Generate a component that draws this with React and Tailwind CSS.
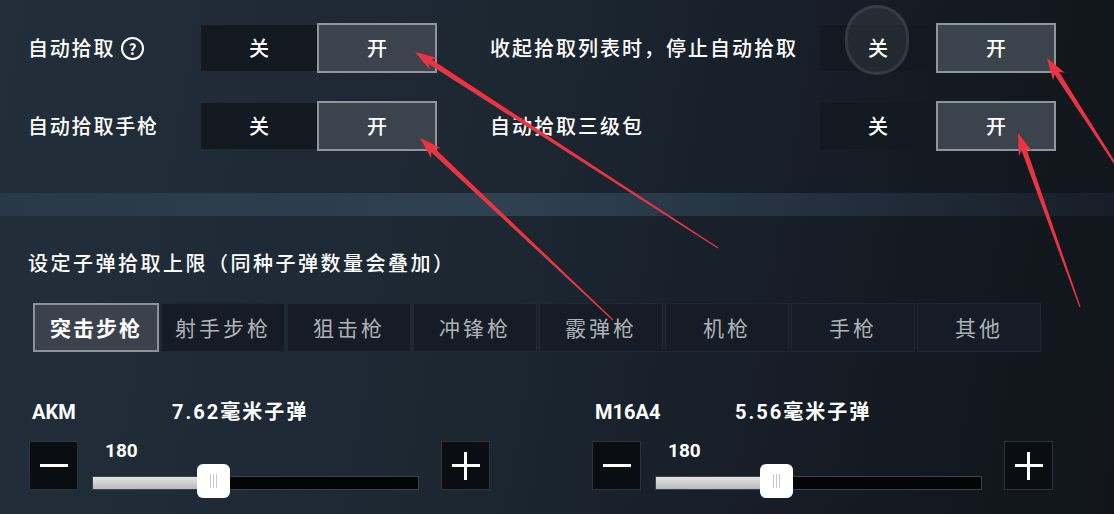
const cjk = { fontFamily: '"Noto Sans CJK SC", "Noto Sans", sans-serif' };
const num = { fontFamily: 'Roboto, "Noto Sans CJK SC", sans-serif' };

const toggleRows = [
  { left: "自动拾取", help: true, right: "收起拾取列表时，停止自动拾取" },
  { left: "自动拾取手枪", help: false, right: "自动拾取三级包" },
];

const tabs = ["突击步枪", "射手步枪", "狙击枪", "冲锋枪", "霰弹枪", "机枪", "手枪", "其他"];

const guns = [
  { name: "AKM", ammo: "7.62毫米子弹", value: 180, pos: 0.32 },
  { name: "M16A4", ammo: "5.56毫米子弹", value: 180, pos: 0.32 },
];

// red annotation arrows: tip -> tail
const arrows = [
  { tip: [415, 52], tail: [718, 248] },
  { tip: [420, 138], tail: [613, 320] },
  { tip: [1047, 58], tail: [1132, 190] },
  { tip: [1018, 133], tail: [1080, 307] },
];

function arrowPoints({ tip, tail }) {
  const dx = tail[0] - tip[0];
  const dy = tail[1] - tip[1];
  const len = Math.hypot(dx, dy);
  const ux = dx / len;
  const uy = dy / len;
  const nx = -uy;
  const ny = ux;
  const p = (d, w) => `${tip[0] + ux * d + nx * w},${tip[1] + uy * d + ny * w}`;
  return [
    p(0, 0),
    p(22, 7),
    p(18, 2.6),
    p(len, 0.6),
    p(len, -0.6),
    p(18, -2.6),
    p(22, -7),
  ].join(" ");
}

function Toggle() {
  return (
    <div className="flex items-center">
      <div className="w-[116px] h-[46px] bg-[#121921] flex items-center justify-center text-white text-[20px] font-medium">
        关
      </div>
      <div className="w-[120px] h-[50px] bg-[#3b434c] border-2 border-[#8f959b] flex items-center justify-center text-white text-[20px] font-medium">
        开
      </div>
    </div>
  );
}

function AmmoSlider({ gun }) {
  return (
    <div className="w-[462px]">
      <div className="flex items-center h-[22px] pl-[3px] text-white text-[20px] font-bold" style={num}>
        <span className="w-[140px]">{gun.name}</span>
        <span className="tracking-[2px]">{gun.ammo}</span>
      </div>

      <div className="flex items-center mt-[18px]">
        <div className="w-[49px] h-[49px] bg-[#0a0d11] border border-[#2c333b] flex items-center justify-center">
          <div className="w-[28px] h-[3px] bg-white"></div>
        </div>

        <div className="w-[327px] h-[49px] ml-[14px] flex flex-col">
          <p className="pl-[13px] text-white text-[19px] font-bold leading-[20px]" style={num}>
            {gun.value}
          </p>
          <div className="relative mt-[15px] h-[14px] bg-[#040507] border border-[#3d434a]">
            <div
              className="h-full bg-[linear-gradient(180deg,#e4e4e4,#b9b9b9)]"
              style={{ width: `${gun.pos * 100 + 5}%` }}
            ></div>
            <div
              className="absolute top-[-13px] w-[33px] h-[34px] bg-white rounded-md flex items-center justify-center gap-[2px]"
              style={{ left: `${gun.pos * 100}%` }}
            >
              <div className="w-px h-[14px] bg-[#c8c8c8]"></div>
              <div className="w-px h-[14px] bg-[#c8c8c8]"></div>
              <div className="w-px h-[14px] bg-[#c8c8c8]"></div>
            </div>
          </div>
        </div>

        <div className="w-[49px] h-[49px] ml-[22px] bg-[#0a0d11] border border-[#2c333b] flex items-center justify-center relative">
          <div className="w-[28px] h-[3px] bg-white"></div>
          <div className="absolute w-[3px] h-[28px] bg-white"></div>
        </div>
      </div>
    </div>
  );
}

export default function App() {
  return (
    <div
      className="relative w-[1114px] h-[514px] overflow-hidden bg-[linear-gradient(100deg,#222e3a_0%,#1c2732_45%,#141a22_80%,#11151b_100%)]"
      style={cjk}
    >
      <div className="pt-[23px] flex flex-col gap-[28px]">
        {toggleRows.map((row) => (
          <div key={row.left} className="grid grid-cols-[462px_1fr] pl-[28px]">
            <div className="flex items-center">
              <div className="w-[173px] flex items-center text-white text-[20px] font-medium tracking-[1.8px]">
                {row.left}
                {row.help && (
                  <span className="ml-[6px] w-[23px] h-[23px] rounded-full border-2 border-white flex items-center justify-center text-[15px] font-bold tracking-normal leading-none">
                    ?
                  </span>
                )}
              </div>
              <Toggle />
            </div>
            <div className="flex items-center">
              <div className="w-[330px] text-white text-[20px] font-medium tracking-[2px]">
                {row.right}
              </div>
              <Toggle />
            </div>
          </div>
        ))}
      </div>

      <div className="mt-[42px] h-[23px] bg-[linear-gradient(90deg,#283846_0%,#2f4252_45%,#243241_70%,#171e27_100%)]"></div>

      <h3 className="mt-[35px] pl-[28px] h-[24px] leading-[24px] text-white text-[20px] font-medium tracking-[2.5px]">
        设定子弹拾取上限（同种子弹数量会叠加）
      </h3>

      <div className="mt-[28px] pl-[33px] flex gap-[2px]">
        {tabs.map((tab, i) => (
          <div
            key={tab}
            className={
              i === 0
                ? "w-[126px] h-[49px] bg-[#3b424b] border-2 border-[#8d9399] flex items-center justify-center text-white text-[21px] font-bold tracking-[2px]"
                : "w-[124px] h-[49px] bg-[#151c25] border border-[#1f2731] flex items-center justify-center text-[#aeb2b7] text-[21px] tracking-[3px]"
            }
          >
            {tab}
          </div>
        ))}
      </div>

      <div className="mt-[49px] pl-[29px] flex gap-[101px]">
        {guns.map((gun) => (
          <AmmoSlider key={gun.name} gun={gun} />
        ))}
      </div>

      <div className="absolute left-[845px] top-[5px] w-[64px] h-[70px] rounded-full border-[3px] border-[#ffffff14] bg-[#ffffff12]"></div>

      <svg className="absolute inset-0 pointer-events-none" width="1114" height="514" viewBox="0 0 1114 514">
        {arrows.map((a, i) => (
          <polygon key={i} points={arrowPoints(a)} fill="#ec3342" />
        ))}
      </svg>
    </div>
  );
}
